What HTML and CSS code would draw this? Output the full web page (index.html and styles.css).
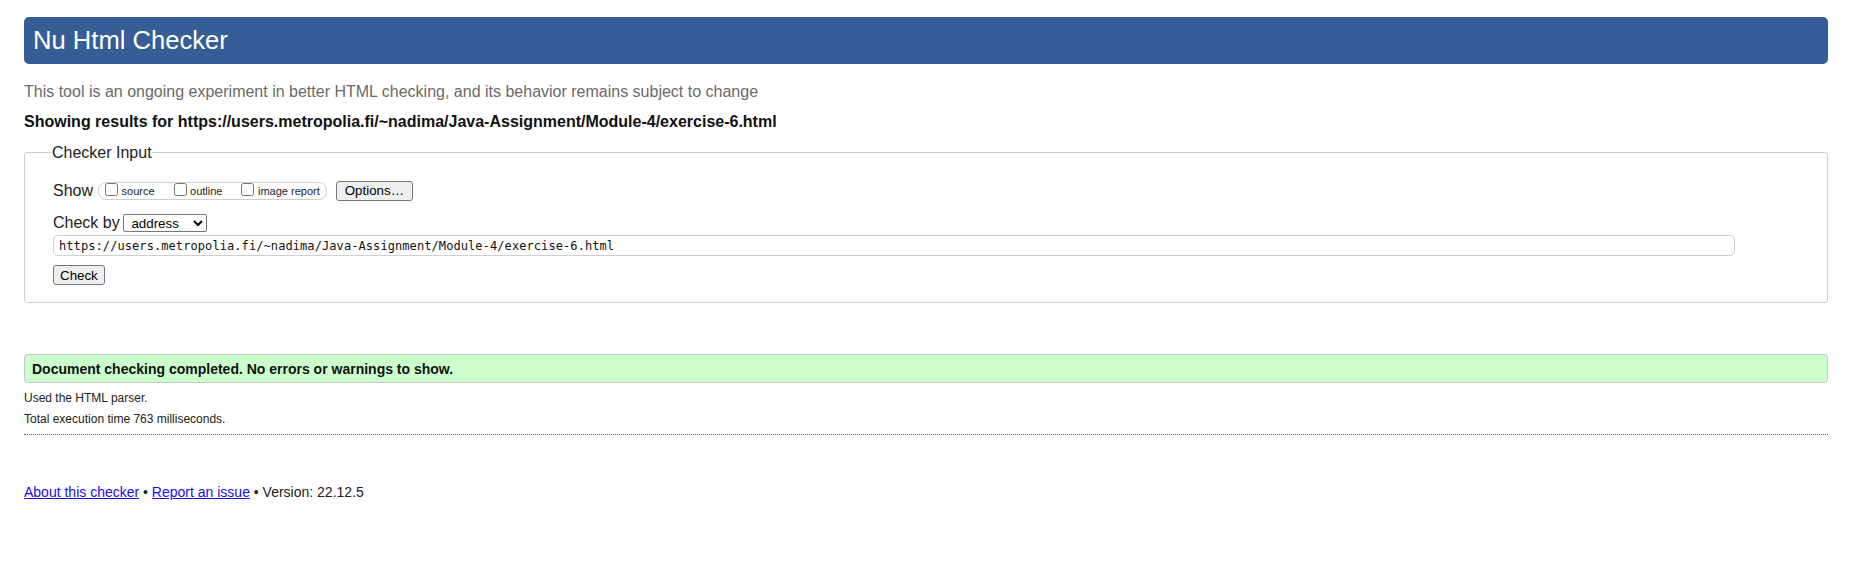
FILE: index.html
```html
<!DOCTYPE html>
<html lang="en">
<head>
<meta charset="utf-8">
<title>Showing results for https://users.metropolia.fi/~nadima/Java-Assignment/Module-4/exercise-6.html - Nu Html Checker</title>
<link rel="stylesheet" href="styles.css">
</head>
<body class="page">
  <h1 class="title">Nu Html Checker</h1>
  <p class="intro">This tool is an ongoing experiment in better HTML checking, and its behavior remains subject to change</p>
  <p class="showing">Showing results for https://users.metropolia.fi/~nadima/Java-Assignment/Module-4/exercise-6.html</p>
  <form class="checker">
    <fieldset class="input-set">
      <legend class="input-legend">Checker Input</legend>
      <div class="row show-row">
        <span class="row-label">Show</span>
        <span class="pill">
          <label class="opt"><input class="cb" type="checkbox"><span class="opt-text">source</span></label>
          <label class="opt"><input class="cb" type="checkbox"><span class="opt-text">outline</span></label>
          <label class="opt"><input class="cb" type="checkbox"><span class="opt-text">image report</span></label>
        </span>
        <button class="btn options" type="button">Options…</button>
      </div>
      <div class="row by-row">
        <label class="row-label by-label">Check by</label>
        <select class="by-select"><option>address</option><option>file upload</option><option>text input</option></select>
      </div>
      <input class="url" type="url" value="https://users.metropolia.fi/~nadima/Java-Assignment/Module-4/exercise-6.html">
      <button class="btn check" type="button">Check</button>
    </fieldset>
  </form>
  <div class="success">Document checking completed. No errors or warnings to show.</div>
  <p class="note first-note">Used the HTML parser.</p>
  <p class="note">Total execution time 763 milliseconds.</p>
  <hr class="rule">
  <p class="footer"><a class="link" href="#">About this checker</a> • <a class="link" href="#">Report an issue</a> • Version: 22.12.5</p>
</body>
</html>
```
FILE: styles.css
```css
html, body {
  background: #fff;
}
.page {
  margin: 0;
  padding: 0 23px 0 24px;
  font-family: "Liberation Sans", Arial, sans-serif;
  color: #222;
}
.title {
  margin: 17px 0 0;
  padding: 8.5px 9px 9.5px;
  background: #365d95;
  color: #fff;
  font-size: 25.6px;
  font-weight: normal;
  line-height: normal;
  border-radius: 5px;
}
.intro {
  margin: 19px 0 0;
  font-size: 16px;
  color: #6a6a6a;
}
.showing {
  margin: 12px 0 0;
  font-size: 16px;
  font-weight: bold;
  color: #111;
}
.checker {
  margin: 12.5px 0 0;
}
.input-set {
  margin: 0;
  padding: 19px 28px 17.2px 28px;
  border: 1px solid #cfcfcf;
  border-radius: 3px;
}
.input-legend {
  padding: 0;
  margin-left: -1px;
  font-size: 16px;
  color: #222;
}
.row {
  display: flex;
}
.show-row {
  align-items: center;
  height: 20px;
}
.row-label {
  font-size: 16px;
}
.pill {
  display: flex;
  align-items: flex-start;
  box-sizing: border-box;
  height: 18px;
  margin-left: 5px;
  padding: 0 6px 0 6px;
  border: 1px solid #cfcfcf;
  border-radius: 8px;
  gap: 19px;
}
.opt {
  display: flex;
  align-items: flex-start;
  font-size: 11px;
}
.cb {
  width: 13px;
  height: 13px;
  margin: 0 3.5px 0 0;
}
.opt-text {
  line-height: 13px;
  margin-top: 2.3px;
}
.btn {
  box-sizing: border-box;
  height: 20px;
  padding: 0 6px;
  font-family: "Liberation Sans", Arial, sans-serif;
  font-size: 13.33px;
  color: #000;
  background: #efefef;
  border: 1px solid #767676;
  border-radius: 3px;
}
.options {
  margin-left: 9px;
  padding: 0 8px;
}
.by-row {
  align-items: baseline;
  margin-top: 13.5px;
}
.by-select {
  box-sizing: border-box;
  width: 84px;
  height: 18px;
  margin: 0 0 0 3.7px;
  padding: 0 0 0 3px;
  font-family: "Liberation Sans", Arial, sans-serif;
  font-size: 13.33px;
  color: #000;
  background: #fff;
  border: 1px solid #767676;
  border-radius: 2px;
}
.url {
  display: block;
  box-sizing: border-box;
  width: 1682px;
  height: 21px;
  margin: 3.3px 0 0;
  padding: 0 5px;
  font-family: "DejaVu Sans Mono", monospace;
  font-size: 12px;
  letter-spacing: 0.08px;
  color: #111;
  border: 1px solid #cfcfcf;
  border-radius: 5px;
  outline: none;
}
.check {
  display: block;
  margin-top: 9px;
}
.success {
  margin: 50.8px 0 0;
  padding: 5.5px 7px;
  font-size: 14px;
  font-weight: bold;
  color: #111;
  background: #ccffcc;
  border: 1px solid #c6c6c6;
  border-radius: 4px;
}
.note {
  margin: 6.9px 0 0;
  font-size: 12px;
  color: #222;
}
.first-note {
  margin-top: 7.7px;
}
.rule {
  margin: 8.5px 0 0;
  height: 0;
  border: 0;
  border-top: 1px dotted #666;
}
.footer {
  margin: 49px 0 0;
  font-size: 14px;
  color: #222;
}
.link {
  color: #1a0dee;
}
```
